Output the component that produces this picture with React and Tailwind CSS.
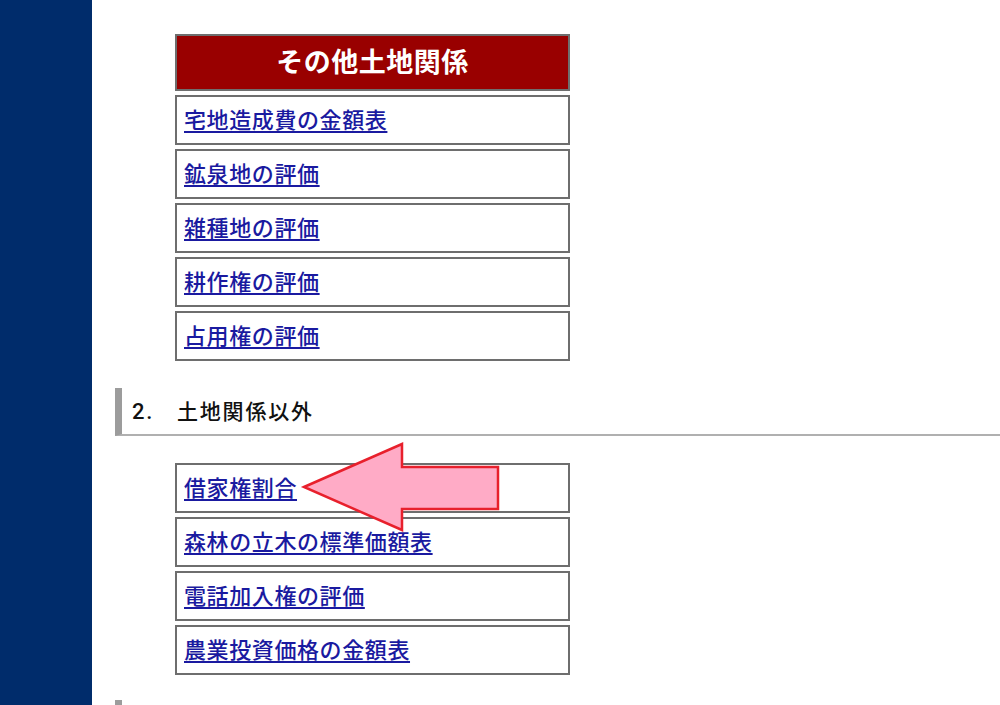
import React from 'react';

const otherLand = [
  '宅地造成費の金額表',
  '鉱泉地の評価',
  '雑種地の評価',
  '耕作権の評価',
  '占用権の評価',
];

const nonLand = [
  '借家権割合',
  '森林の立木の標準価額表',
  '電話加入権の評価',
  '農業投資価格の金額表',
];

const font = { fontFamily: '"Noto Sans CJK JP", "Noto Sans", sans-serif' };

const LinkRow = ({ label }) => (
  <div className="h-[50px] shrink-0 border-2 border-[#6e6e6e] bg-white flex items-center px-[7px] pb-[5px]">
    <a href="#" className="text-[22px] tracking-[0.6px] text-[#1a1aa0] font-medium underline underline-offset-[3px] decoration-[1.5px] leading-none">
      {label}
    </a>
  </div>
);

const Arrow = () => (
  <svg
    className="absolute left-[125px] top-[-23px]"
    width="202"
    height="94"
    viewBox="0 0 202 94"
  >
    <polygon
      points="4,47 102,4 102,27 198,27 198,69 102,69 102,90"
      fill="#ffabc6"
      stroke="#e8202c"
      strokeWidth="2.5"
      strokeLinejoin="miter"
    />
  </svg>
);

export default function App() {
  return (
    <div className="flex w-[1000px] h-[705px] overflow-hidden bg-white" style={font}>
      {/* sidebar */}
      <div className="w-[92px] shrink-0 bg-[#002c6b]" />

      <div className="flex-1 flex flex-col">
        {/* その他土地関係 */}
        <div className="shrink-0 ml-[83px] mt-[34px] w-[395px] flex flex-col gap-[4px]">
          <div className="h-[57px] shrink-0 border-2 border-[#6e6e6e] bg-[#990000] flex items-center justify-center pb-[2px]">
            <span className="text-white text-[27px] font-bold tracking-[0.5px]">その他土地関係</span>
          </div>
          {otherLand.map((t) => (
            <LinkRow key={t} label={t} />
          ))}
        </div>

        {/* heading */}
        <div className="shrink-0 ml-[23px] mt-[27px] h-[48px] border-l-[7px] border-l-[#9c9c9c] border-b-2 border-b-[#b0b0b0] flex items-center pl-[10px]">
          <h2 className="text-[21px] tracking-[1.8px] text-[#111] font-medium leading-none">
            <span style={{ fontFamily: 'Roboto, "Noto Sans CJK JP", sans-serif' }} className="text-[22px]">2.</span>　土地関係以外
          </h2>
        </div>

        {/* 土地関係以外 */}
        <div className="shrink-0 relative ml-[83px] mt-[27px] w-[395px] flex flex-col gap-[4px]">
          {nonLand.map((t) => (
            <LinkRow key={t} label={t} />
          ))}
          <Arrow />
        </div>

        <div className="shrink-0 ml-[23px] mt-[25px] w-[7px] h-[20px] bg-[#9c9c9c]" />
      </div>
    </div>
  );
}
